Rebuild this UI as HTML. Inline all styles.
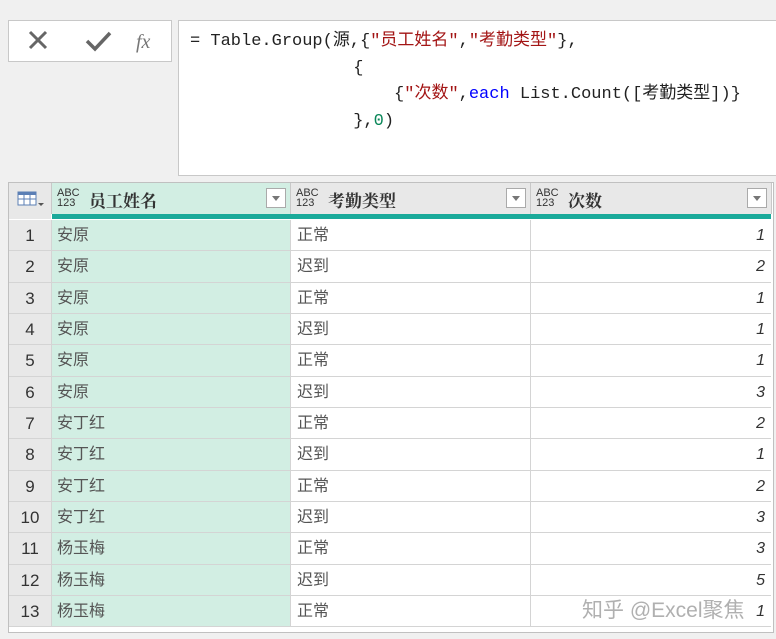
<!DOCTYPE html>
<html><head><meta charset="utf-8"><style>
body{margin:0;width:776px;height:639px;background:#f0f0f0;position:relative;overflow:hidden;font-family:"Liberation Sans","Noto Sans CJK SC",sans-serif}
.abs{position:absolute}
.box{background:#fff;border:1px solid #c8c8c8}
.code{font-family:"Liberation Mono","Noto Sans CJK SC",monospace;font-size:17px;color:#222;white-space:pre;line-height:26.7px}
.s{color:#a31515}.n{color:#098658}.k{color:#0000ff}
.hdr{background:#e8e8e8;border-right:1px solid #c8c8c8;height:31px;top:183px}
.dd{position:absolute;right:4px;top:5px;width:20px;height:20px;background:#fff;border:1px solid #aaa;box-sizing:border-box}
.dd:after{content:"";position:absolute;left:5px;top:7px;border-left:4px solid transparent;border-right:4px solid transparent;border-top:5px solid #777}
.abc{position:absolute;left:5px;top:5px;font-size:11px;line-height:10px;color:#333}
.ht{position:absolute;left:37px;top:4px;font-size:17px;font-weight:bold;color:#333;font-family:"Liberation Serif","Noto Serif CJK SC",serif}
.row{position:absolute;left:9px;width:762px;border-bottom:1px solid #d4d4d4;box-sizing:border-box}
.c{position:absolute;top:0;bottom:0;line-height:31px;font-size:16px;color:#555;border-right:1px solid #d4d4d4;box-sizing:border-box}
</style></head><body>
<div class="abs box" style="left:8px;top:20px;width:162px;height:40px">
<svg width="162" height="40"><path d="M21 11 L37 27 M37 11 L21 27" stroke="#666" stroke-width="3"/><path d="M78 20 L86 28 L101 12" stroke="#666" stroke-width="3.5" fill="none"/><text x="127" y="27" font-family="Liberation Serif" font-style="italic" font-size="20" fill="#777">fx</text></svg>
</div>
<div class="abs box" style="left:178px;top:20px;width:598px;height:154px"></div>
<div class="abs code" style="left:190px;top:29px">= Table.Group(源,{<span class="s">"员工姓名"</span>,<span class="s">"考勤类型"</span>},
                {
                    {<span class="s">"次数"</span>,<span class="k">each</span> List.Count([考勤类型])}
                },<span class="n">0</span>)</div>
<div class="abs" style="left:8px;top:182px;width:764px;height:449px;background:#fff;border:1px solid #c0c0c0"></div>
<div class="abs hdr" style="left:9px;width:42px"><svg width="42" height="31"><rect x="9" y="9" width="18" height="13" fill="#fff" stroke="#5b7fb5"/><rect x="9" y="9" width="18" height="3" fill="#5b7fb5"/><path d="M9 16H27M15 12V22M21 12V22" stroke="#5b7fb5"/><path d="M29 20l3 3 3-3z" fill="#555"/></svg></div>
<div class="abs hdr" style="left:52px;width:238px;background:#d2eee3"><div class="abc">ABC<br>123</div><div class="ht">员工姓名</div><div class="dd"></div></div>
<div class="abs hdr" style="left:291px;width:239px"><div class="abc">ABC<br>123</div><div class="ht">考勤类型</div><div class="dd"></div></div>
<div class="abs hdr" style="left:531px;width:240px"><div class="abc">ABC<br>123</div><div class="ht">次数</div><div class="dd"></div></div>
<div class="abs" style="left:52px;top:214px;width:719px;height:5px;background:#1aaa9a"></div>
<div class="abs" style="left:9px;top:214px;width:42px;height:5px;background:#e8e8e8"></div>
<div id="rows"></div>
<script>
var d=[["安原","正常",1],["安原","迟到",2],["安原","正常",1],["安原","迟到",1],["安原","正常",1],["安原","迟到",3],["安丁红","正常",2],["安丁红","迟到",1],["安丁红","正常",2],["安丁红","迟到",3],["杨玉梅","正常",3],["杨玉梅","迟到",5],["杨玉梅","正常",1]];
var h="";d.forEach(function(r,i){var t=220+Math.round(i*31.33),t2=220+Math.round((i+1)*31.33);
h+='<div class="row" style="top:'+t+'px;height:'+(t2-t)+'px"><div class="c" style="left:0;width:43px;background:#e8e8e8;text-align:center;color:#333;font-size:17px">'+(i+1)+'</div><div class="c" style="left:43px;width:239px;background:#d2eee3;padding-left:5px">'+r[0]+'</div><div class="c" style="left:282px;width:240px;padding-left:6px">'+r[1]+'</div><div class="c" style="left:522px;width:240px;text-align:right;padding-right:6px;font-style:italic;color:#333;border-right:none">'+r[2]+'</div></div>';});
document.getElementById("rows").innerHTML=h;
</script>
<div class="abs" style="left:582px;top:594px;font-size:21px;color:rgba(150,150,150,0.75)">知乎 @Excel聚焦</div>
</body></html>
